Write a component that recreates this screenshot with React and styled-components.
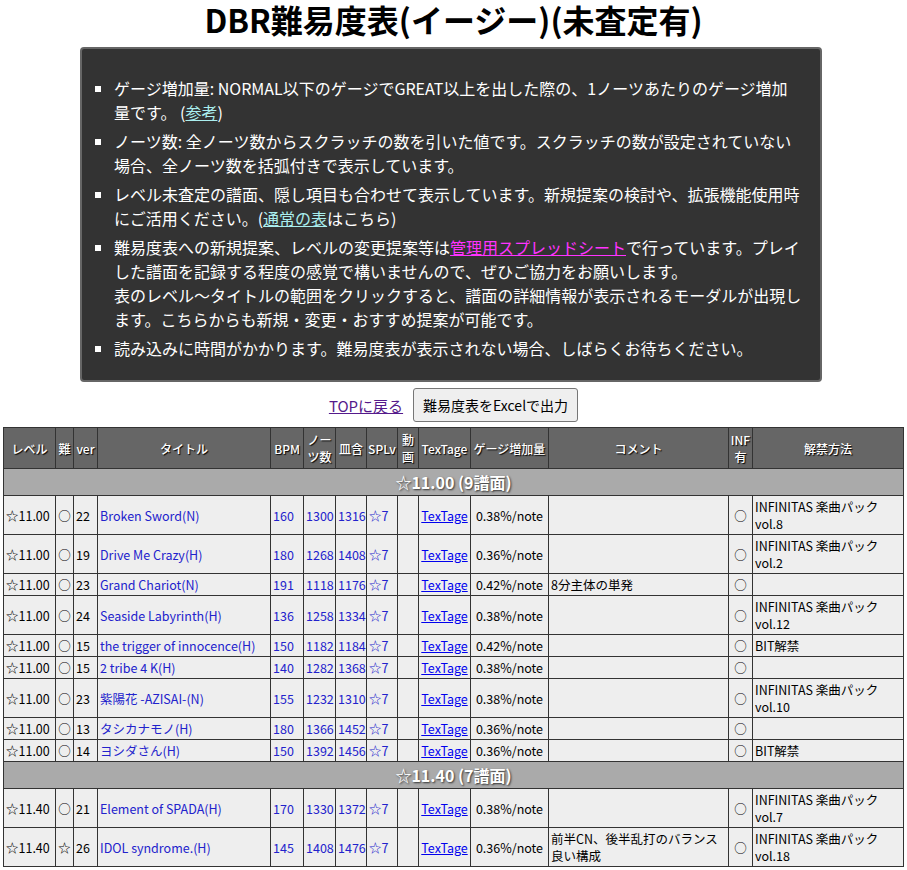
import React from "react";
import styled, { createGlobalStyle } from "styled-components";

const G = createGlobalStyle`
  body { margin: 0; font-family: "Noto Sans CJK JP", "Noto Sans", sans-serif; background: #fff; color: #000; }
`;
const Title = styled.h1`
  margin: 0; padding-top: 1px; text-align: center; font-size: 32px; line-height: 36px; font-weight: 700;
`;
const Box = styled.div`
  width: 742px; box-sizing: border-box; margin: 10px 0 0 80px; background: #333; color: #fff;
  border: 2px solid #666; border-radius: 4px; padding: 27px 18px 20px 12px;
`;
const List = styled.ul`
  margin: 0; padding-left: 20px; list-style: square; font-size: 16px; line-height: 24px;
  li { margin-bottom: 5px; }
  li:last-child { margin-bottom: 0; }
  a { color: #aee; }
  a.m { color: #f3f; }
`;
const Actions = styled.div`
  display: flex; justify-content: center; align-items: center; gap: 10px; margin: 6px 0 5px;
  a { color: #551a8b; font-size: 15px; }
`;
const Btn = styled.button`
  font-family: inherit; font-size: 14px; padding: 6px 9px; background: #efefef; border: 1px solid #767676; border-radius: 3px;
`;
const Table = styled.table`
  margin-left: 3px; width: 900px; table-layout: fixed; border-collapse: collapse; font-size: 12.5px;
  td, th { border: 1px solid #333; padding: 2px 2px; line-height: 17px; }
`;
const Th = styled.th`
  background: #666; color: #fff; font-weight: 500; text-shadow: 1px 1px 1px #000; height: 36px; font-size: 12px;
  && { padding: 2px 0; }
`;
const GroupCell = styled.td`
  background: #aaa; color: #fff; font-weight: 700; font-size: 16px; text-align: center; height: 22px;
  text-shadow: 1px 1px 2px #333;
`;
const Row = styled.tr`
  background: #eee;
  td { height: ${p => (p.$tall ? "34px" : "17px")}; }
`;
const Blue = styled.td`color: #22c;`;
const Center = styled.td`text-align: center;`;
const Link = styled.a`color: #00e;`;

const widths = [52, 18, 24, 173, 33, 32, 31, 31, 21, 52, 78, 180, 24, 151];
const g1 = [
  ["22","Broken Sword(N)",160,1300,1316,"0.38%","","INFINITAS 楽曲パック vol.8"],
  ["19","Drive Me Crazy(H)",180,1268,1408,"0.36%","","INFINITAS 楽曲パック vol.2"],
  ["23","Grand Chariot(N)",191,1118,1176,"0.42%","8分主体の単発",""],
  ["24","Seaside Labyrinth(H)",136,1258,1334,"0.38%","","INFINITAS 楽曲パック vol.12"],
  ["15","the trigger of innocence(H)",150,1182,1184,"0.42%","","BIT解禁"],
  ["15","2 tribe 4 K(H)",140,1282,1368,"0.38%","",""],
  ["23","紫陽花 -AZISAI-(N)",155,1232,1310,"0.38%","","INFINITAS 楽曲パック vol.10"],
  ["13","タシカナモノ(H)",180,1366,1452,"0.36%","",""],
  ["14","ヨシダさん(H)",150,1392,1456,"0.36%","","BIT解禁"],
];
const g2 = [
  ["21","Element of SPADA(H)",170,1330,1372,"0.38%","","INFINITAS 楽曲パック vol.7","○"],
  ["26","IDOL syndrome.(H)",145,1408,1476,"0.36%","前半CN、後半乱打のバランス良い構成","INFINITAS 楽曲パック vol.18","☆"],
];

const Rows = ({ lv, data }) => data.map((r, i) => (
  <Row key={i} $tall={r[7].length > 10 || r[6].length > 12}>
    <td>☆{lv}</td><Center>{r[8] || "○"}</Center><td>{r[0]}</td>
    <Blue>{r[1]}</Blue><Blue>{r[2]}</Blue><Blue>{r[3]}</Blue><Blue>{r[4]}</Blue><Blue>☆7</Blue><td></td>
    <Center><Link href="#">TexTage</Link></Center><Center>{r[5]}/note</Center><td>{r[6]}</td>
    <Center>○</Center><td>{r[7]}</td>
  </Row>
));

export default function App() {
  return (
    <>
      <G />
      <Title>DBR難易度表(イージー)(未査定有)</Title>
      <Box>
        <List>
          <li>ゲージ増加量: NORMAL以下のゲージでGREAT以上を出した際の、1ノーツあたりのゲージ増加量です。 (<a href="#">参考</a>)</li>
          <li>ノーツ数: 全ノーツ数からスクラッチの数を引いた値です。スクラッチの数が設定されていない場合、全ノーツ数を括弧付きで表示しています。</li>
          <li>レベル未査定の譜面、隠し項目も合わせて表示しています。新規提案の検討や、拡張機能使用時にご活用ください。(<a href="#">通常の表</a>はこちら)</li>
          <li>難易度表への新規提案、レベルの変更提案等は<a className="m" href="#">管理用スプレッドシート</a>で行っています。プレイした譜面を記録する程度の感覚で構いませんので、ぜひご協力をお願いします。<br />表のレベル～タイトルの範囲をクリックすると、譜面の詳細情報が表示されるモーダルが出現します。こちらからも新規・変更・おすすめ提案が可能です。</li>
          <li>読み込みに時間がかかります。難易度表が表示されない場合、しばらくお待ちください。</li>
        </List>
      </Box>
      <Actions><a href="#">TOPに戻る</a><Btn>難易度表をExcelで出力</Btn></Actions>
      <Table>
        <colgroup>{widths.map((w, i) => <col key={i} style={{ width: w }} />)}</colgroup>
        <thead><tr>
          {["レベル","難","ver","タイトル","BPM","ノーツ数","皿含","SPLv","動画","TexTage","ゲージ増加量","コメント","INF有","解禁方法"].map(h => <Th key={h}>{h}</Th>)}
        </tr></thead>
        <tbody>
          <tr><GroupCell colSpan={14}>☆11.00 (9譜面)</GroupCell></tr>
          <Rows lv="11.00" data={g1} />
          <tr><GroupCell colSpan={14}>☆11.40 (7譜面)</GroupCell></tr>
          <Rows lv="11.40" data={g2} />
        </tbody>
      </Table>
    </>
  );
}
